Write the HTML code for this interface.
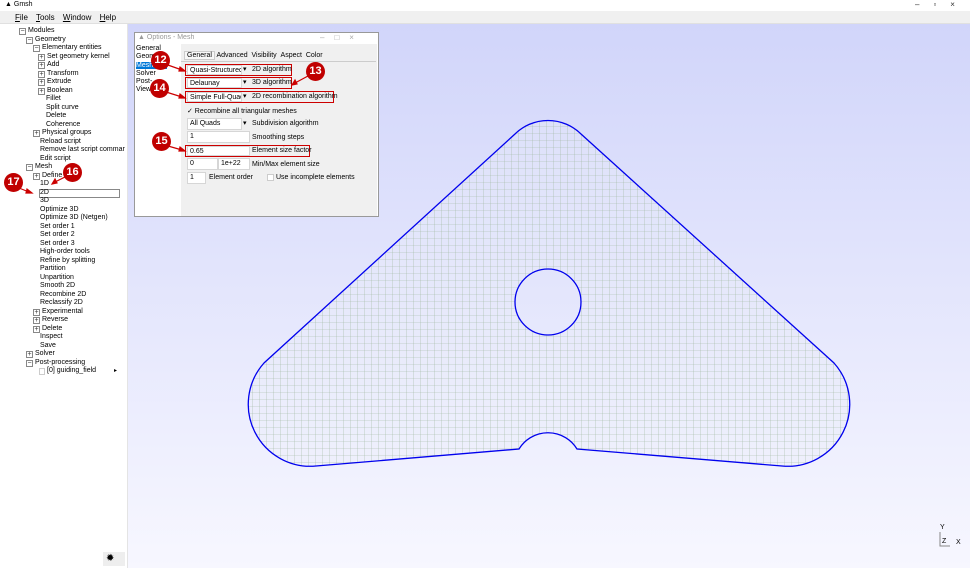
<!DOCTYPE html>
<html><head><meta charset="utf-8"><style>
*{margin:0;padding:0;box-sizing:border-box}
body{width:970px;height:568px;overflow:hidden;font-family:"Liberation Sans",sans-serif;font-size:7px;color:#000;background:#fff;position:relative}
.a{position:absolute;white-space:nowrap}
.tb{left:0;top:0;width:970px;height:11px;background:#fff}
.mb{left:0;top:11px;width:970px;height:13px;background:#f0f0f0;border-bottom:1px solid #e0e0e0}
.gfx{left:128px;top:24px;width:842px;height:544px;background:linear-gradient(#d1d5fa,#f7f7ff)}
.bx{width:7px;height:7px;border:1px solid #888;background:#fff;font-size:7px;line-height:5px;text-align:center;color:#333}
.dlg{left:134px;top:32px;width:245px;height:185px;background:#fff;border:1px solid #999}
.w{background:#fff;border:1px solid #d6d6d6;height:12px;padding-left:2px;line-height:10px;overflow:hidden}
.red{border:1.5px solid #c00;}
.c{width:19px;height:19px;border-radius:50%;background:#c00000;color:#fff;font-size:11px;font-weight:bold;text-align:center;line-height:19px}
</style></head><body>
<div class="a tb"></div>
<div class="a" style="left:5px;top:1px;font-size:7px">▲ Gmsh</div>
<div class="a" style="left:915px;top:0px;font-size:8px;color:#333;letter-spacing:14px">–▫×</div>
<div class="a mb"></div>
<div class="a" style="left:15px;top:13px;font-size:8px;word-spacing:6px"><u>F</u>ile <u>T</u>ools <u>W</u>indow <u>H</u>elp</div>

<div class="a gfx"></div>
<svg class="a" style="left:0;top:0" width="970" height="568">
<defs>
<pattern id="g" width="7" height="7" patternUnits="userSpaceOnUse"><path d="M0 0H7M0 0V7" stroke="#9db59d" stroke-width="0.6" fill="none"/></pattern>
<clipPath id="cp"><path clip-rule="evenodd" d="M515,134 A47 47 0 0 1 581,134 L834,363 A62 62 0 0 1 782,466 L577,449 A34 34 0 0 0 519,449 L316,466 A62 62 0 0 1 264,363 Z M515,302 A33 33 0 1 0 581,302 A33 33 0 1 0 515,302Z"/></clipPath>
</defs>
<g clip-path="url(#cp)"><rect x="240" y="110" width="620" height="370" fill="#eceff9" opacity=".3"/>
<rect x="240" y="110" width="620" height="370" fill="url(#g)"/></g>
<path fill="none" stroke="#0000ee" stroke-width="1.3" d="M515,134 A47 47 0 0 1 581,134 L834,363 A62 62 0 0 1 782,466 L577,449 A34 34 0 0 0 519,449 L316,466 A62 62 0 0 1 264,363 Z"/>
<circle cx="548" cy="302" r="33" fill="none" stroke="#0000ee" stroke-width="1.3"/>
<path d="M940 532V546H950" stroke="#888" fill="none" stroke-width="1"/>
</svg>
<div class="a" style="left:940px;top:524px;font-size:7px">Y</div>
<div class="a" style="left:942px;top:538px;font-size:7px">Z</div>
<div class="a" style="left:956px;top:539px;font-size:7px">X</div>

<div class="a" style="left:0;top:24px;width:128px;height:544px;background:#fff;border-right:1px solid #e4e4e4"></div>
<div class="a" id="tree" style="left:0;top:26px"></div>
<div class="a" style="left:103px;top:552px;width:22px;height:14px;background:#eee;font-size:10px;line-height:14px;padding-left:3px">✹</div>

<div class="a dlg"></div>
<div class="a" style="left:138px;top:34px;color:#999;font-size:7px">▲ Options - Mesh</div>
<div class="a" style="left:320px;top:33px;color:#aaa;font-size:8px;letter-spacing:10px">–□×</div>
<div class="a" style="left:136px;top:45px;line-height:8.3px;font-size:7px">General<br>Geom<br><span style="background:#0078d7;color:#fff;padding-right:14px">Mesh</span><br>Solver<br>Post-<br>View</div>
<div class="a" style="left:181px;top:44px;width:196px;height:172px;background:#f0f0f0"></div>
<div class="a" style="left:184px;top:50px;height:11px;font-size:7px;line-height:11px">
<span style="border:1px solid #ccc;padding:0 2px;background:#f8f8f8">General</span> Advanced &nbsp;Visibility &nbsp;Aspect &nbsp;Color</div>
<div class="a" style="left:181px;top:61px;width:195px;height:1px;background:#ccc"></div>

<div class="a red" style="left:185px;top:64px;width:107px;height:12px"></div>
<div class="a w" style="left:187px;top:65px;width:55px;height:10px">Quasi-Structured (</div><div class="a" style="left:243px;top:65px">▾</div>
<div class="a" style="left:252px;top:66px">2D algorithm</div>
<div class="a red" style="left:185px;top:77px;width:107px;height:12px"></div>
<div class="a w" style="left:187px;top:78px;width:55px;height:10px">Delaunay</div><div class="a" style="left:243px;top:78px">▾</div>
<div class="a" style="left:252px;top:79px">3D algorithm</div>
<div class="a red" style="left:185px;top:91px;width:149px;height:12px"></div>
<div class="a w" style="left:187px;top:92px;width:55px;height:10px">Simple Full-Quad</div><div class="a" style="left:243px;top:92px">▾</div>
<div class="a" style="left:252px;top:93px">2D recombination algorithm</div>
<div class="a" style="left:187px;top:107px">✓ Recombine all triangular meshes</div>
<div class="a w" style="left:187px;top:118px;width:55px">All Quads</div><div class="a" style="left:243px;top:119px">▾</div>
<div class="a" style="left:252px;top:120px">Subdivision algorithm</div>
<div class="a w" style="left:187px;top:131px;width:63px">1</div>
<div class="a" style="left:252px;top:134px">Smoothing steps</div>
<div class="a red" style="left:185px;top:145px;width:125px;height:12px"></div>
<div class="a w" style="left:187px;top:146px;width:63px;height:10px">0.65</div>
<div class="a" style="left:252px;top:147px">Element size factor</div>
<div class="a w" style="left:187px;top:158px;width:31px">0</div>
<div class="a w" style="left:218px;top:158px;width:32px">1e+22</div>
<div class="a" style="left:252px;top:161px">Min/Max element size</div>
<div class="a w" style="left:187px;top:172px;width:19px">1</div>
<div class="a" style="left:209px;top:174px">Element order</div>
<div class="a" style="left:267px;top:174px;width:7px;height:7px;background:#fff;border:1px solid #ccc"></div>
<div class="a" style="left:276px;top:174px">Use incomplete elements</div>

<svg class="a" style="left:0;top:0" width="400" height="220">
<g stroke="#c00" stroke-width="1.2" fill="#c00">
<line x1="165" y1="64" x2="182" y2="70"/><path d="M185 71 l-5 -4 l-1 4z"/>
<line x1="308" y1="76" x2="295" y2="83"/><path d="M292 85 l3 -5 l2 4z"/>
<line x1="166" y1="92" x2="182" y2="97"/><path d="M185 98 l-5 -4 l-1 4z"/>
<line x1="168" y1="146" x2="182" y2="150"/><path d="M185 151 l-5 -4 l-1 4z"/>
<line x1="65" y1="177" x2="55" y2="182"/><path d="M52 184 l3 -5 l2 4z"/>
<line x1="19" y1="188" x2="29" y2="192"/><path d="M32 193 l-5 -4 l-1 4z"/>
</g></svg>
<div class="a c" style="left:151px;top:51px">12</div>
<div class="a c" style="left:306px;top:62px">13</div>
<div class="a c" style="left:150px;top:79px">14</div>
<div class="a c" style="left:152px;top:132px">15</div>
<div class="a c" style="left:63px;top:163px">16</div>
<div class="a c" style="left:4px;top:173px">17</div>

<script>
var rows=[[19,'m','Modules'],[26,'m','Geometry'],[33,'m','Elementary entities'],[38,'p','Set geometry kernel'],[38,'p','Add'],[38,'p','Transform'],[38,'p','Extrude'],[38,'p','Boolean'],[38,'','Fillet'],[38,'','Split curve'],[38,'','Delete'],[38,'','Coherence'],[33,'p','Physical groups'],[33,'','Reload script'],[33,'','Remove last script commar'],[33,'','Edit script'],[26,'m','Mesh'],[33,'p','Define'],[33,'','1D'],[33,'s','2D'],[33,'','3D'],[33,'','Optimize 3D'],[33,'','Optimize 3D (Netgen)'],[33,'','Set order 1'],[33,'','Set order 2'],[33,'','Set order 3'],[33,'','High-order tools'],[33,'','Refine by splitting'],[33,'','Partition'],[33,'','Unpartition'],[33,'','Smooth 2D'],[33,'','Recombine 2D'],[33,'','Reclassify 2D'],[33,'p','Experimental'],[33,'p','Reverse'],[33,'p','Delete'],[33,'','Inspect'],[33,'','Save'],[26,'p','Solver'],[26,'m','Post-processing'],[40,'g','[0] guiding_field']];
var h='';rows.forEach(function(r,i){var y=27+i*8.5,x=r[0];
if(r[1]=='m'||r[1]=='p')h+='<div class="a bx" style="left:'+(x)+'px;top:'+(y+1)+'px">'+(r[1]=='m'?'−':'+')+'</div>';
var tx=x+(r[1]=='m'||r[1]=='p'?9:(x==38?8:7));
if(r[1]=='s')h+='<div class="a" style="left:'+(tx-1)+'px;top:'+y+'px;width:'+(121-tx)+'px;height:9px;border:1px solid #888"></div>';
if(r[1]=='g'){h+='<div class="a" style="left:39px;top:'+(y+1)+'px;width:6px;height:7px;border:1px solid #ccc"></div><div class="a" style="left:114px;top:'+y+'px;font-size:6px">▸</div>';tx=47;}
h+='<div class="a" style="left:'+tx+'px;top:'+y+'px">'+r[2]+'</div>';});
document.getElementById('tree').outerHTML=h;
</script>
</body></html>
